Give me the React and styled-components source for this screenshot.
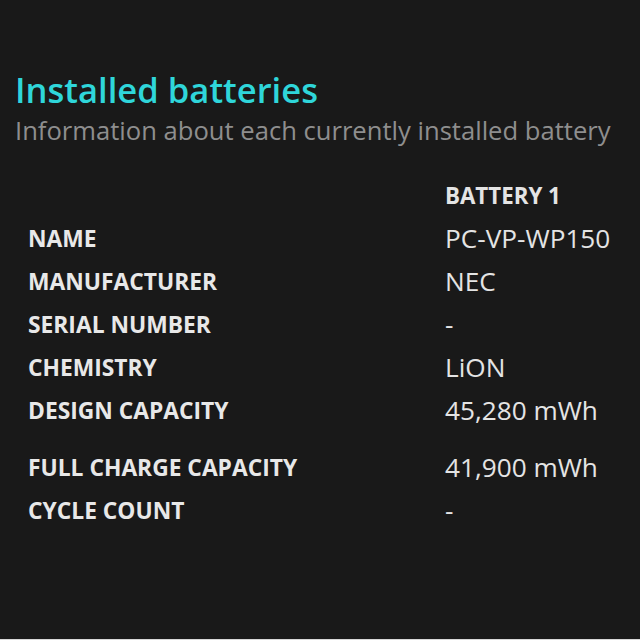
import React from "react";
import styled, { createGlobalStyle } from "styled-components";

const Global = createGlobalStyle`
  html, body { margin: 0; padding: 0; background: #191919; }
  body { font-family: "Open Sans", "Noto Sans", sans-serif; }
`;

const Page = styled.div`
  width: 640px;
  height: 640px;
  box-sizing: border-box;
  background: #191919;
  border-bottom: 1px solid #d8d8d8;
  padding: 70px 0 0 15px;
  overflow: hidden;
`;

const Title = styled.h1`
  margin: 0;
  font-family: "Open Sans", sans-serif;
  font-weight: 600;
  font-size: 34.6px;
  line-height: 40px;
  color: #2fd6da;
`;

const Subtitle = styled.p`
  margin: 0;
  font-family: "Open Sans", sans-serif;
  font-size: 25.6px;
  line-height: 42px;
  color: #8e8e8e;
  white-space: nowrap;
`;

const Table = styled.div`
  display: grid;
  grid-template-columns: 417px auto;
  padding-left: 13px;
  margin-top: 22px;
`;

const Cell = styled.div`
  font-family: "Open Sans", sans-serif;
  line-height: 43px;
  height: ${(p) => (p.$tall ? 57 : 43)}px;
  display: flex;
  align-items: ${(p) => (p.$tall ? "flex-end" : "center")};
  white-space: nowrap;
`;

const Label = styled(Cell)`
  font-weight: 700;
  font-size: 22.8px;
  color: #e8e8e8;
`;

const Value = styled(Cell)`
  font-weight: ${(p) => (p.$head ? 700 : 400)};
  font-size: ${(p) => (p.$head ? 22.3 : 26.2)}px;
  color: #e4e4e4;
`;

const rows = [
  ["NAME", "PC-VP-WP150"],
  ["MANUFACTURER", "NEC"],
  ["SERIAL NUMBER", "-"],
  ["CHEMISTRY", "LiON"],
  ["DESIGN CAPACITY", "45,280 mWh"],
  ["FULL CHARGE CAPACITY", "41,900 mWh", true],
  ["CYCLE COUNT", "-"],
];

export default function App() {
  return (
    <>
      <Global />
      <Page>
        <Title>Installed batteries</Title>
        <Subtitle>Information about each currently installed battery</Subtitle>
        <Table>
          <Label />
          <Value $head>BATTERY 1</Value>
          {rows.map(([k, v, tall]) => (
            <React.Fragment key={k}>
              <Label $tall={tall}>{k}</Label>
              <Value $tall={tall}>{v}</Value>
            </React.Fragment>
          ))}
        </Table>
      </Page>
    </>
  );
}
